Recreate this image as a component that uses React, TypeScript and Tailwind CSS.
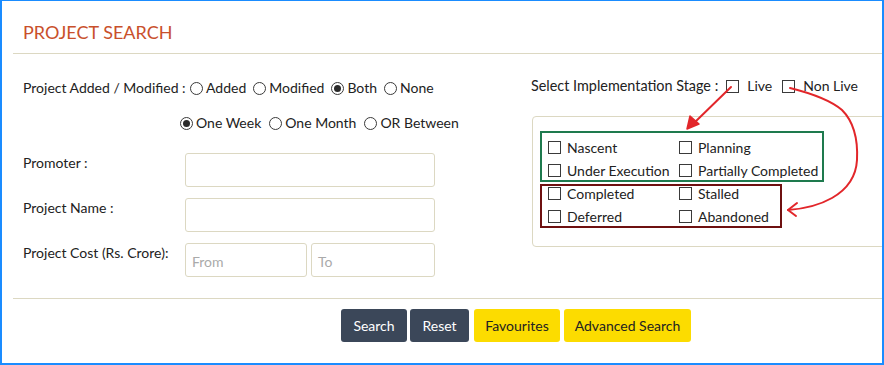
import React from 'react';

const font = { fontFamily: 'Lato, "Open Sans", Arial, sans-serif' };

function Radio({ label, checked }: { label: string; checked?: boolean }) {
  return (
    <span className="flex items-center gap-[3px]">
      <span className="w-[13px] h-[13px] rounded-full border border-[#3a3a3a] bg-white flex items-center justify-center">
        {checked && <span className="w-[7px] h-[7px] rounded-full bg-[#2a2a2a]" />}
      </span>
      <span>{label}</span>
    </span>
  );
}

function Box() {
  return <span className="block w-[13px] h-[13px] border border-[#3a3a3a] bg-white shrink-0" />;
}

function Check({ label }: { label: string }) {
  return (
    <div className="flex items-center gap-[6px] h-[23px]">
      <Box />
      <span>{label}</span>
    </div>
  );
}

const stages = ['Nascent', 'Planning', 'Under Execution', 'Partially Completed', 'Completed', 'Stalled', 'Deferred', 'Abandoned'];

function Field({ label, children }: { label: string; children: React.ReactNode }) {
  return (
    <div className="flex items-start">
      <div className="w-[162px] leading-[20px]">{label}</div>
      {children}
    </div>
  );
}

export default function App() {
  return (
    <div
      className="relative w-[884px] h-[365px] overflow-hidden bg-white border-x-2 border-b-2 border-t border-[#1a8cff] text-[14px] text-[#222]"
      style={font}
    >
      {/* header */}
      <div className="h-[52px] pl-[21px] pt-[18px]">
        <h1 className="text-[18px] leading-[26px] text-[#c9502b]">PROJECT SEARCH</h1>
      </div>
      <div className="ml-[11px] h-px bg-[#dcd8c2]" />

      <div className="h-[244px] flex">
        {/* left column */}
        <div className="w-[529px] shrink-0 pl-[21px] pt-[24px]">
          <div className="flex items-center leading-[20px]">
            <span className="w-[167px]">Project Added / Modified :</span>
            <div className="flex items-center gap-[7px]">
              <Radio label="Added" />
              <Radio label="Modified" />
              <Radio label="Both" checked />
              <Radio label="None" />
            </div>
          </div>
          <div className="flex items-center gap-[8px] leading-[20px] mt-[15px] ml-[157px]">
            <Radio label="One Week" checked />
            <Radio label="One Month" />
            <Radio label="OR Between" />
          </div>

          <div className="mt-[20px] flex flex-col gap-[11px]">
            <Field label="Promoter :">
              <div className="w-[250px] h-[34px] rounded-[3px] border border-[#dcd8c2]" />
            </Field>
            <Field label="Project Name :">
              <div className="w-[250px] h-[34px] rounded-[3px] border border-[#dcd8c2]" />
            </Field>
            <Field label="Project Cost (Rs. Crore):">
              <div className="flex gap-[4px]">
                <div className="w-[122px] h-[34px] rounded-[3px] border border-[#dcd8c2] pl-[6px] flex items-center text-[#aaa] pt-[2px]">From</div>
                <div className="w-[124px] h-[34px] rounded-[3px] border border-[#dcd8c2] pl-[6px] flex items-center text-[#aaa] pt-[2px]">To</div>
              </div>
            </Field>
          </div>
        </div>

        {/* right column */}
        <div className="flex-1 pt-[22px]">
          <div className="flex items-center leading-[20px] whitespace-nowrap">
            <span className="text-[14.4px]">Select Implementation Stage :</span>
            <span className="ml-[8px]"><Box /></span>
            <span className="ml-[8px] -mt-px">Live</span>
            <span className="ml-[10px]"><Box /></span>
            <span className="ml-[8px] -mt-px">Non Live</span>
          </div>
          <div className="mt-[20px] ml-px w-[420px] h-[131px] rounded-[4px] border border-[#dcd8c2] pl-[15px] pt-[19px]">
            <div className="grid grid-cols-[131px_180px]">
              {stages.map((s) => (
                <Check key={s} label={s} />
              ))}
            </div>
          </div>
        </div>
      </div>

      <div className="ml-[11px] h-px bg-[#dcd8c2]" />

      <div className="pl-[339px] pt-[10px] flex gap-[3px]">
        <button className="h-[33px] w-[66px] rounded-[3px] bg-[#3b4759] text-white">Search</button>
        <button className="h-[33px] w-[59px] rounded-[3px] bg-[#3b4759] text-white">Reset</button>
        <button className="h-[33px] w-[86px] ml-[2px] rounded-[3px] bg-[#fcdc00] text-[#222]">Favourites</button>
        <button className="h-[33px] w-[127px] ml-px rounded-[3px] bg-[#fcdc00] text-[#222]">Advanced Search</button>
      </div>

      {/* annotation overlay */}
      <svg className="absolute left-[-2px] top-[-1px] pointer-events-none" width="884" height="365" viewBox="0 0 884 365" fill="none">
        <rect x="541" y="132" width="282" height="49" stroke="#1e7a4e" strokeWidth="2" />
        <rect x="541" y="185" width="240" height="42" stroke="#6e1010" strokeWidth="2" />
        <path d="M731 87 L693 124" stroke="#e2262a" strokeWidth="2" strokeLinecap="round" />
        <path d="M687 129 L690 116 L699 124 Z" fill="#e2262a" stroke="#e2262a" strokeWidth="1.5" strokeLinejoin="round" />
        <path
          d="M790 88 C806 92 828 98 842 110 C854 122 858 140 857 160 C856 178 846 190 832 198 C818 206 802 209 788 210"
          stroke="#e2262a"
          strokeWidth="2"
          strokeLinecap="round"
        />
        <path d="M797 203 L788 210 L796 216" stroke="#e2262a" strokeWidth="2" strokeLinecap="round" strokeLinejoin="round" />
      </svg>
    </div>
  );
}
